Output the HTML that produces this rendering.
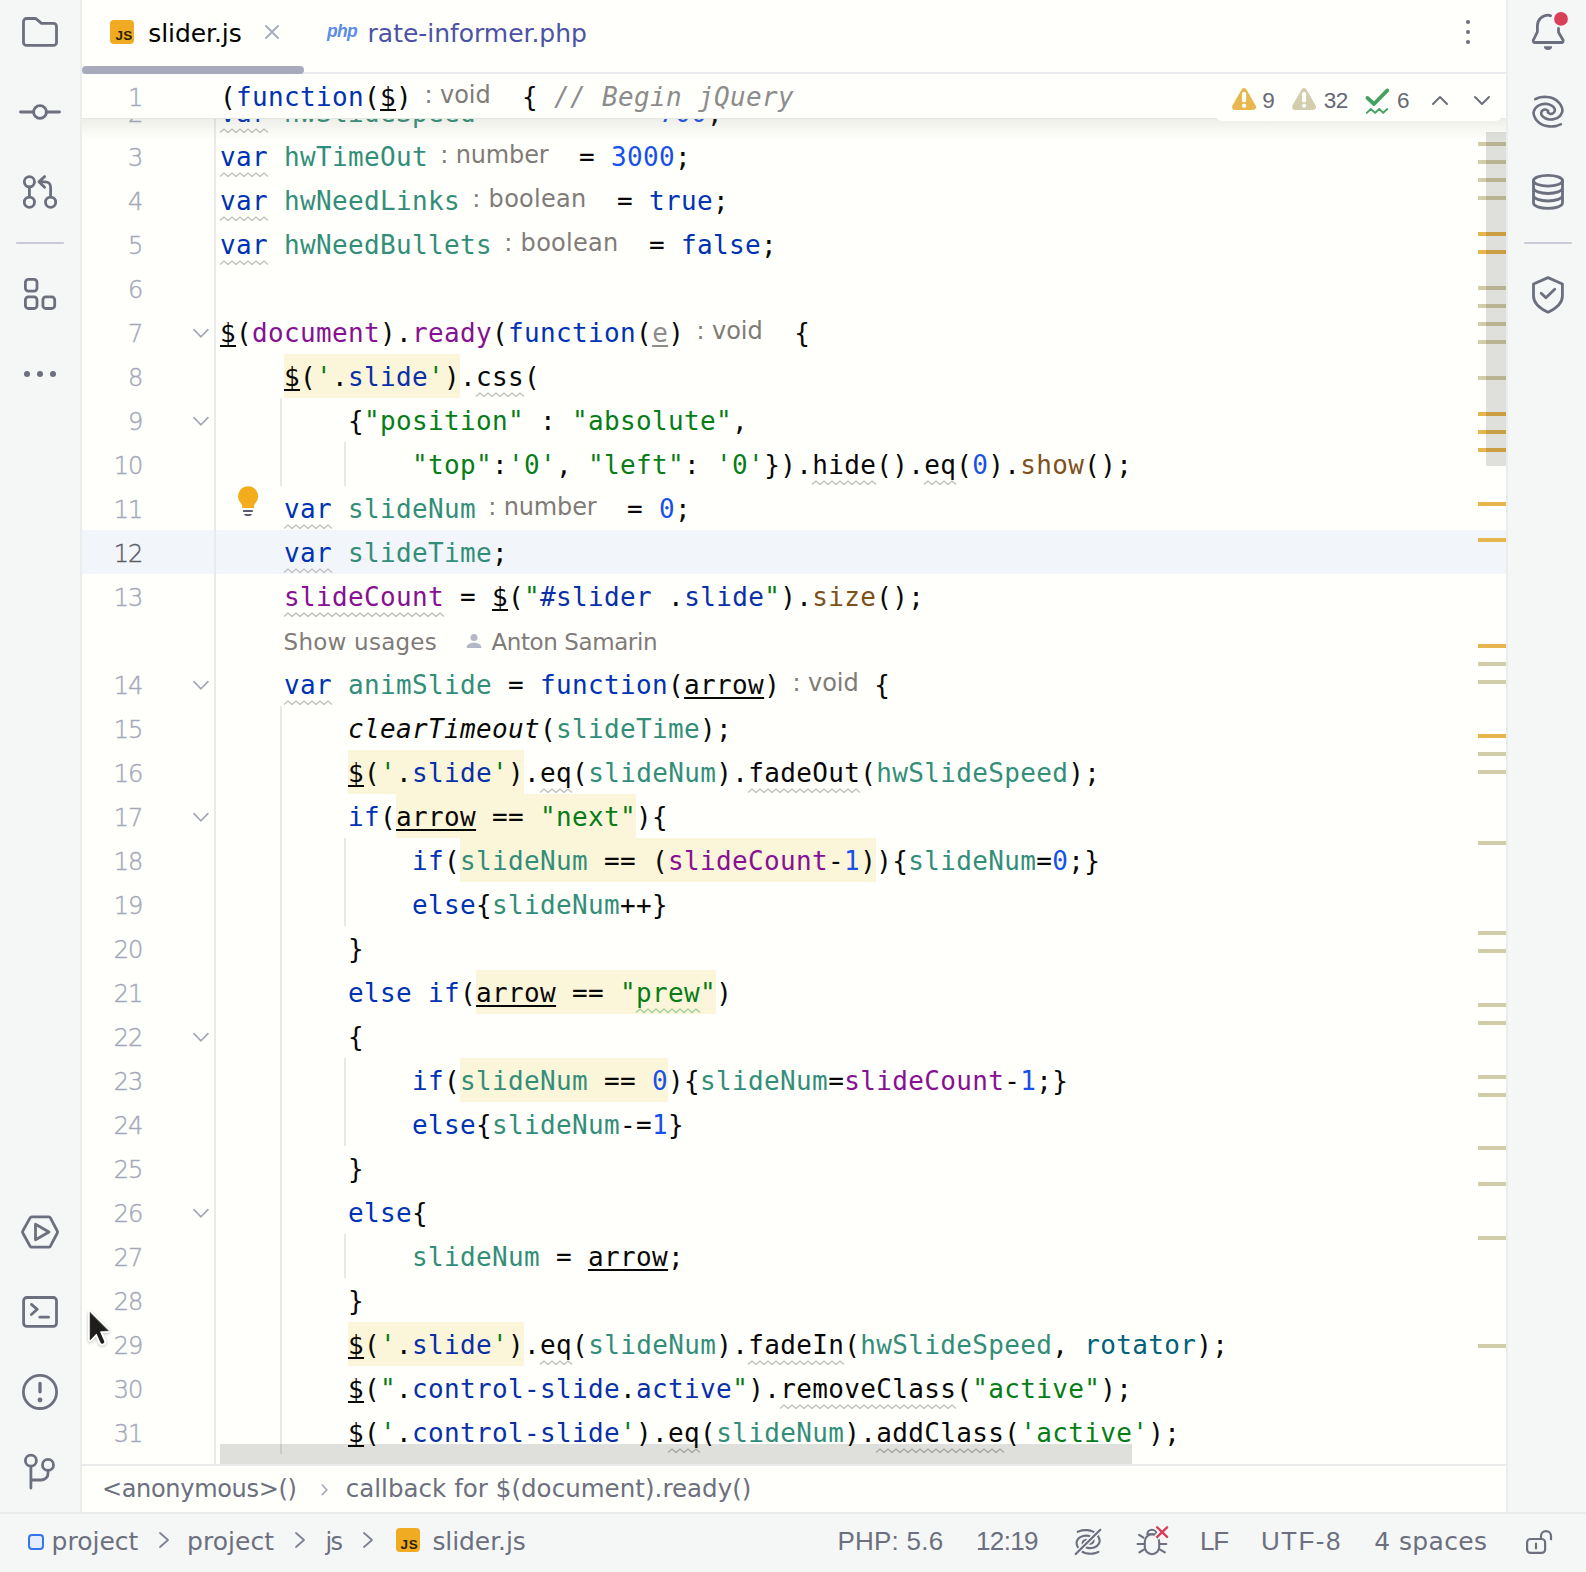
<!DOCTYPE html>
<html lang="en"><head><meta charset="utf-8"><title>slider.js</title>
<style>
html,body{margin:0;padding:0}
body{width:1586px;height:1572px;overflow:hidden;position:relative;background:#f5f7f7;font-family:"Liberation Sans","DejaVu Sans",sans-serif;color:#6c707e}
.abs{position:absolute}
#left{left:0;top:0;width:80px;height:1512px;background:#f5f7f7;border-right:2px solid #ebeded;box-sizing:content-box}
#right{left:1506px;top:0;width:78px;height:1512px;background:#f5f7f7;border-left:2px solid #ebeded}
#main{left:82px;top:0;width:1424px;height:1512px;background:#fffffb;overflow:hidden}
#tabs{left:0;top:0;width:1425px;height:72px}
#tabline{left:0;top:72px;width:1425px;height:2px;background:#e9eaec}
#pill{left:0;top:66px;width:222px;height:8px;border-radius:4px;background:#a8aabc}
.tabtxt{font-size:26px;line-height:30px;white-space:pre}
#ed{left:0;top:74px;width:1425px;height:1390px;overflow:hidden}
.ln{position:absolute;left:138px;height:44px;line-height:46px;white-space:pre;font-family:"DejaVu Sans Mono","Liberation Mono",monospace;font-size:26px;letter-spacing:0.347px;color:#080808}
.num{position:absolute;left:0;width:60.6px;height:44px;line-height:48px;text-align:right;font-family:"DejaVu Sans","Liberation Sans",sans-serif;font-weight:200;font-size:24px;color:#a3a8b8;letter-spacing:-0.8px;-webkit-text-stroke:0.4px #a3a8b8}
.k{color:#0033b3}.v{color:#338e79}.g{color:#871094}.s{color:#067d17}.n{color:#1750eb}
.c{color:#8c8c8c;font-style:italic}.f{color:#80501c}.r{color:#00627a}.b{color:#0a30a8}
.u{text-decoration:underline;text-decoration-thickness:1.6px;text-underline-offset:3.2px;text-decoration-skip-ink:none}
.e{color:#8c8c8c;text-decoration:underline;text-decoration-thickness:1.6px;text-underline-offset:3.2px;text-decoration-skip-ink:none}
.i{font-style:italic}
.inl{display:inline-block;box-sizing:border-box;height:44px;line-height:43px;vertical-align:top;font-family:"DejaVu Sans","Liberation Sans",sans-serif;font-size:24px;color:#7f7b78;white-space:pre;overflow:hidden}
.hl{position:absolute;height:44px;background:#fbf5d9}
.guide{position:absolute;width:2px;background:#e7e8ea}
#crumbs{left:0;top:1464px;width:1425px;height:48px;border-top:2px solid #ebebeb;box-sizing:border-box;font-size:26px;line-height:30px;white-space:pre}
#status{left:0;top:1512px;width:1586px;height:60px;background:#f5f7f7;border-top:2px solid #e9eaea;box-sizing:border-box;font-size:26px;white-space:pre}
#status span,#crumbs span{position:absolute}
.jsic{position:absolute;width:24px;height:24px;border-radius:4px;background:#f0ab22;color:#2b2206;font-weight:bold;font-size:14px;line-height:26px;text-align:center;letter-spacing:-0.5px;font-family:"Liberation Sans","DejaVu Sans",sans-serif}
svg{position:absolute;overflow:visible}
</style></head><body>

<div id="left" class="abs">
<svg width="81" height="1512" viewBox="0 0 81 1512" fill="none" stroke="#6c707e" stroke-width="2.8" stroke-linecap="round" stroke-linejoin="round">
<path d="M23.5 21.5 a3 3 0 0 1 3 -3 H35 a2.2 2.2 0 0 1 1.500 .6 L41.500 23.4 H53.5 a3 3 0 0 1 3 3 V42.4 a3 3 0 0 1 -3 3 H26.5 a3 3 0 0 1 -3 -3 Z"/>
<path d="M20.5 112 H33 M47 112 H59.5"/><circle cx="40" cy="112" r="6.4"/>
<circle cx="29.4" cy="181.8" r="5.1"/><circle cx="29.4" cy="202.2" r="5.1"/><circle cx="50.6" cy="202.2" r="5.1"/>
<path d="M29.4 187.2 V196.8 M50.6 196.800 V187 a5.200 5.200 0 0 0 -5.200 -5.200 H39.500 M44.600 176.600 L38.900 181.800 L44.600 187.300"/>
<path d="M17 243 H63" stroke="#c9ccd6" stroke-width="2"/>
<rect x="25.4" y="279.4" width="11.6" height="11.7" rx="3"/><rect x="25.4" y="296.9" width="11.6" height="11.6" rx="3"/><rect x="42.9" y="296.9" width="11.8" height="11.6" rx="3"/>
<g fill="#6c707e" stroke="none"><circle cx="27" cy="374" r="3"/><circle cx="40" cy="374" r="3"/><circle cx="53" cy="374" r="3"/></g>
<path d="M31.800 1216.900 H48.700 a2 2 0 0 1 1.700 1 L57.300 1231 a2 2 0 0 1 0 2 L50.400 1246.200 a2 2 0 0 1 -1.700 1 H31.800 a2 2 0 0 1 -1.700 -1 L22.800 1233 a2 2 0 0 1 0 -2 L30.100 1217.900 a2 2 0 0 1 1.700 -1 Z"/><path d="M35.500 1224.300 V1239.800 L49 1232 Z"/>
<rect x="23.600" y="1297.500" width="32.900" height="28.900" rx="3.200"/><path d="M31.400 1304.400 L37.300 1309.300 L31.400 1314.500 M39.800 1317.200 H48.600"/>
<circle cx="40" cy="1391.900" r="16.600"/><path d="M40 1383.500 V1391.800" stroke-width="3.300"/><circle cx="40" cy="1400" r="2.400" fill="#6c707e" stroke="none"/>
<circle cx="30.900" cy="1460.700" r="5.500"/><circle cx="48" cy="1464.900" r="5.500"/><path d="M30.900 1466.500 V1488 M30.900 1480 H41.500 a6.500 6.500 0 0 0 6.500 -6.500 V1470.600"/>
</svg>
</div>
<div id="right" class="abs">
<svg width="78" height="400" viewBox="1508 0 78 400" fill="none" stroke="#6c707e" stroke-width="2.8" stroke-linecap="round" stroke-linejoin="round">
<path d="M1550.600 15.700 C1549.800 15.300 1549 15.100 1548 15.100 A10.600 10.600 0 0 0 1537.400 25.700 V31.800 L1533.400 40 a1.700 1.700 0 0 0 1.500 2.500 H1561.500 a1.700 1.700 0 0 0 1.500 -2.500 L1558.500 32.200 V28.500"/><path d="M1543.900 46.200 H1552.100 a4.100 3.800 0 0 1 -8.200 0 z" fill="#6c707e" stroke="none"/>
<circle cx="1561" cy="18.900" r="6.900" fill="#d8405a" stroke="none"/>
<path d="M1535.14 99.14 C1536.02 98.83 1538.46 97.66 1540.43 97.30 C1542.40 96.95 1544.77 96.82 1546.94 97.02 C1549.12 97.22 1551.42 97.56 1553.46 98.53 C1555.50 99.49 1557.70 101.14 1559.16 102.80 C1560.62 104.46 1561.74 106.87 1562.21 108.50 C1562.69 110.13 1562.52 111.22 1562.01 112.57 C1561.50 113.93 1560.45 115.56 1559.16 116.64 C1557.87 117.73 1555.83 118.61 1554.27 119.09 C1552.71 119.56 1551.29 119.63 1549.79 119.50 C1548.30 119.36 1546.61 118.88 1545.32 118.27 C1544.03 117.66 1542.74 116.78 1542.06 115.83 C1541.38 114.88 1541.11 113.52 1541.24 112.57 C1541.38 111.62 1542.13 110.64 1542.87 110.13 C1543.62 109.62 1544.84 109.38 1545.72 109.52 C1546.61 109.66 1547.76 110.71 1548.17 110.94 M1560.87 124.27 C1559.99 124.57 1557.54 125.75 1555.58 126.10 C1553.61 126.45 1551.23 126.59 1549.06 126.38 C1546.89 126.18 1544.58 125.84 1542.55 124.88 C1540.51 123.91 1538.31 122.27 1536.85 120.60 C1535.39 118.94 1534.27 116.53 1533.79 114.90 C1533.32 113.27 1533.49 112.19 1534.00 110.83 C1534.51 109.47 1535.56 107.84 1536.85 106.76 C1538.14 105.67 1540.17 104.79 1541.73 104.32 C1543.29 103.84 1544.72 103.77 1546.21 103.91 C1547.70 104.04 1549.40 104.52 1550.69 105.13 C1551.98 105.74 1553.27 106.62 1553.95 107.57 C1554.63 108.52 1554.90 109.88 1554.76 110.83 C1554.63 111.78 1553.88 112.76 1553.13 113.27 C1552.39 113.78 1551.17 114.02 1550.28 113.88 C1549.40 113.75 1548.25 112.70 1547.84 112.46" stroke-width="2.600"/>
<ellipse cx="1548" cy="180.700" rx="14.500" ry="5.400"/><path d="M1533.500 180.700 V203 a14.500 5.400 0 0 0 29 0 V180.700 M1533.500 188.100 a14.500 5.400 0 0 0 29 0 M1533.500 195.600 a14.500 5.400 0 0 0 29 0" />
<path d="M1525 243 H1571" stroke="#c9ccd6" stroke-width="2"/>
<path d="M1548 277.600 L1562.400 284 V296 C1562.400 303.500 1556 308.500 1548 312.200 C1540 308.500 1533.500 303.500 1533.500 296 V284 Z"/><path d="M1541.200 293.300 L1545.900 297.800 L1554.700 289.200"/>
</svg>
</div>
<div id="main" class="abs">
<div id="tabs" class="abs">
<div class="jsic" style="left:28px;top:20px"></div><div class="abs" style="left:33.6px;top:15.7px;font-family:'Liberation Sans','DejaVu Sans',sans-serif;font-size:13.5px;line-height:40px;letter-spacing:0.09px;white-space:pre;color:#2b2206;font-weight:bold">JS</div>
<div class="abs" style="left:66.2px;top:13.6px;font-family:'DejaVu Sans','Liberation Sans',sans-serif;font-size:25px;line-height:40px;letter-spacing:-0.07px;white-space:pre;color:#000">slider.js</div>
<svg style="left:183px;top:25px" width="14" height="14" viewBox="0 0 14 14" stroke="#a8adbd" stroke-width="2" stroke-linecap="round"><path d="M1 1 L13 13 M13 1 L1 13"/></svg>
<div class="abs" style="left:245.0px;top:10.6px;font-family:'Liberation Sans','DejaVu Sans',sans-serif;font-size:17.5px;line-height:40px;letter-spacing:-0.69px;white-space:pre;color:#5c8ce6;font-style:italic;font-weight:bold">php</div>
<div class="abs" style="left:285.6px;top:13.6px;font-family:'DejaVu Sans','Liberation Sans',sans-serif;font-size:25px;line-height:40px;letter-spacing:-0.03px;white-space:pre;color:#4c52a6">rate-informer.php</div>
<svg style="left:1381px;top:19px" width="10" height="28" viewBox="0 0 10 28" fill="#6c707e"><circle cx="5" cy="3" r="2.050"/><circle cx="5" cy="13" r="2.050"/><circle cx="5" cy="23" r="2.050"/></svg>
</div>
<div id="tabline" class="abs"></div><div id="pill" class="abs"></div>
<div id="ed" class="abs">
<div class="abs" style="left:0;top:456px;width:1425px;height:44px;background:#f2f5f9"></div>
<div class="hl" style="left:202px;top:280px;width:176px"></div>
<div class="hl" style="left:266px;top:676px;width:176px"></div>
<div class="hl" style="left:314px;top:720px;width:240px"></div>
<div class="hl" style="left:378px;top:764px;width:416px"></div>
<div class="hl" style="left:394px;top:896px;width:240px"></div>
<div class="hl" style="left:378px;top:984px;width:208px"></div>
<div class="hl" style="left:266px;top:1248px;width:176px"></div>
<div class="abs" style="left:132px;top:0;width:2px;height:1391px;background:#e9eaec"></div>
<div class="guide" style="left:198px;top:324px;height:88px"></div>
<div class="guide" style="left:262px;top:368px;height:44px"></div>
<div class="guide" style="left:198px;top:632px;height:748px"></div>
<div class="guide" style="left:262px;top:764px;height:88px"></div>
<div class="guide" style="left:262px;top:984px;height:88px"></div>
<div class="guide" style="left:262px;top:1160px;height:44px"></div>
<div class="num" style="top:16px">2</div>
<div class="ln" style="top:16px"><span class="k">var</span> <span class="v">hwSlideSpeed</span><span class="inl" style="width:135px;padding-left:12.3px;letter-spacing:-0.16px">: number</span> = <span class="n">700</span>;</div>
<div class="num" style="top:60px">3</div>
<div class="ln" style="top:60px"><span class="k">var</span> <span class="v">hwTimeOut</span><span class="inl" style="width:135px;padding-left:12.3px;letter-spacing:-0.16px">: number</span> = <span class="n">3000</span>;</div>
<div class="num" style="top:104px">4</div>
<div class="ln" style="top:104px"><span class="k">var</span> <span class="v">hwNeedLinks</span><span class="inl" style="width:141px;padding-left:12.3px;letter-spacing:0.28px">: boolean</span> = <span class="k">true</span>;</div>
<div class="num" style="top:148px">5</div>
<div class="ln" style="top:148px"><span class="k">var</span> <span class="v">hwNeedBullets</span><span class="inl" style="width:141px;padding-left:12.3px;letter-spacing:0.28px">: boolean</span> = <span class="k">false</span>;</div>
<div class="num" style="top:192px">6</div>
<div class="num" style="top:236px">7</div>
<div class="ln" style="top:236px"><span class="u">$</span>(<span class="g">document</span>).<span class="g">ready</span>(<span class="k">function</span>(<span class="e">e</span>)<span class="inl" style="width:94px;padding-left:12.3px;letter-spacing:-0.05px">: void</span> {</div>
<div class="num" style="top:280px">8</div>
<div class="ln" style="top:280px">    <span class="u">$</span>(<span class="s">&#x27;</span>.<span class="b">slide</span><span class="s">&#x27;</span>).css(</div>
<div class="num" style="top:324px">9</div>
<div class="ln" style="top:324px">        {<span class="s">&quot;position&quot;</span> : <span class="s">&quot;absolute&quot;</span>,</div>
<div class="num" style="top:368px">10</div>
<div class="ln" style="top:368px">            <span class="s">&quot;top&quot;</span>:<span class="s">&#x27;0&#x27;</span>, <span class="s">&quot;left&quot;</span>: <span class="s">&#x27;0&#x27;</span>}).hide().eq(<span class="n">0</span>).<span class="f">show</span>();</div>
<div class="num" style="top:412px">11</div>
<div class="ln" style="top:412px">    <span class="k">var</span> <span class="v">slideNum</span><span class="inl" style="width:135px;padding-left:12.3px;letter-spacing:-0.16px">: number</span> = <span class="n">0</span>;</div>
<div class="num" style="top:456px;color:#5a5d6b;-webkit-text-stroke-color:#5a5d6b">12</div>
<div class="ln" style="top:456px">    <span class="k">var</span> <span class="v">slideTime</span>;</div>
<div class="num" style="top:500px">13</div>
<div class="ln" style="top:500px">    <span class="g">slideCount</span> = <span class="u">$</span>(<span class="s">&quot;</span><span class="b">#slider</span> .<span class="b">slide</span><span class="s">&quot;</span>).<span class="f">size</span>();</div>
<div class="num" style="top:588px">14</div>
<div class="ln" style="top:588px">    <span class="k">var</span> <span class="v">animSlide</span> = <span class="k">function</span>(<span class="u">arrow</span>)<span class="inl" style="width:94px;padding-left:12.3px;letter-spacing:-0.05px">: void</span>{</div>
<div class="num" style="top:632px">15</div>
<div class="ln" style="top:632px">        <span class="i">clearTimeout</span>(<span class="v">slideTime</span>);</div>
<div class="num" style="top:676px">16</div>
<div class="ln" style="top:676px">        <span class="u">$</span>(<span class="s">&#x27;</span>.<span class="b">slide</span><span class="s">&#x27;</span>).eq(<span class="v">slideNum</span>).fadeOut(<span class="v">hwSlideSpeed</span>);</div>
<div class="num" style="top:720px">17</div>
<div class="ln" style="top:720px">        <span class="k">if</span>(<span class="u">arrow</span> == <span class="s">&quot;next&quot;</span>){</div>
<div class="num" style="top:764px">18</div>
<div class="ln" style="top:764px">            <span class="k">if</span>(<span class="v">slideNum</span> == (<span class="g">slideCount</span>-<span class="n">1</span>)){<span class="v">slideNum</span>=<span class="n">0</span>;}</div>
<div class="num" style="top:808px">19</div>
<div class="ln" style="top:808px">            <span class="k">else</span>{<span class="v">slideNum</span>++}</div>
<div class="num" style="top:852px">20</div>
<div class="ln" style="top:852px">        }</div>
<div class="num" style="top:896px">21</div>
<div class="ln" style="top:896px">        <span class="k">else</span> <span class="k">if</span>(<span class="u">arrow</span> == <span class="s">&quot;prew&quot;</span>)</div>
<div class="num" style="top:940px">22</div>
<div class="ln" style="top:940px">        {</div>
<div class="num" style="top:984px">23</div>
<div class="ln" style="top:984px">            <span class="k">if</span>(<span class="v">slideNum</span> == <span class="n">0</span>){<span class="v">slideNum</span>=<span class="g">slideCount</span>-<span class="n">1</span>;}</div>
<div class="num" style="top:1028px">24</div>
<div class="ln" style="top:1028px">            <span class="k">else</span>{<span class="v">slideNum</span>-=<span class="n">1</span>}</div>
<div class="num" style="top:1072px">25</div>
<div class="ln" style="top:1072px">        }</div>
<div class="num" style="top:1116px">26</div>
<div class="ln" style="top:1116px">        <span class="k">else</span>{</div>
<div class="num" style="top:1160px">27</div>
<div class="ln" style="top:1160px">            <span class="v">slideNum</span> = <span class="u">arrow</span>;</div>
<div class="num" style="top:1204px">28</div>
<div class="ln" style="top:1204px">        }</div>
<div class="num" style="top:1248px">29</div>
<div class="ln" style="top:1248px">        <span class="u">$</span>(<span class="s">&#x27;</span>.<span class="b">slide</span><span class="s">&#x27;</span>).eq(<span class="v">slideNum</span>).fadeIn(<span class="v">hwSlideSpeed</span>, <span class="r">rotator</span>);</div>
<div class="num" style="top:1292px">30</div>
<div class="ln" style="top:1292px">        <span class="u">$</span>(<span class="s">&quot;</span>.<span class="b">control-slide</span>.<span class="b">active</span><span class="s">&quot;</span>).removeClass(<span class="s">&quot;active&quot;</span>);</div>
<div class="num" style="top:1336px">31</div>
<div class="ln" style="top:1336px">        <span class="u">$</span>(<span class="s">&#x27;</span>.<span class="b">control-slide</span><span class="s">&#x27;</span>).eq(<span class="v">slideNum</span>).addClass(<span class="s">&#x27;active&#x27;</span>);</div>
<div class="num" style="top:1380px">32</div>
<div class="ln" style="top:1380px">        <span class="k">if</span>(<span class="v">hwTimeOut</span> &gt; <span class="n">0</span>){</div>
<div class="abs" style="left:201.6px;top:547.5px;font-family:'DejaVu Sans','Liberation Sans',sans-serif;font-size:23px;line-height:40px;letter-spacing:0.23px;white-space:pre;color:#7f7b78">Show usages</div>
<svg style="left:384px;top:560px" width="16" height="14" viewBox="0 0 16 14" fill="#b4b8c4"><circle cx="8" cy="3.500" r="3.500"/><path d="M0.500 14 a7.500 5.500 0 0 1 15 0 z"/></svg>
<div class="abs" style="left:409.4px;top:547.5px;font-family:'DejaVu Sans','Liberation Sans',sans-serif;font-size:23px;line-height:40px;letter-spacing:-0.40px;white-space:pre;color:#7f7b78">Anton Samarin</div>
<svg style="left:110px;top:254px" width="18" height="11" viewBox="0 0 18 11" fill="none" stroke="#a4a8b8" stroke-width="1.700" stroke-linecap="butt" stroke-linejoin="miter"><path d="M1.500 1.200 L8.900 8.800 L16.400 1.200"/></svg>
<svg style="left:110px;top:342px" width="18" height="11" viewBox="0 0 18 11" fill="none" stroke="#a4a8b8" stroke-width="1.700" stroke-linecap="butt" stroke-linejoin="miter"><path d="M1.500 1.200 L8.900 8.800 L16.400 1.200"/></svg>
<svg style="left:110px;top:606px" width="18" height="11" viewBox="0 0 18 11" fill="none" stroke="#a4a8b8" stroke-width="1.700" stroke-linecap="butt" stroke-linejoin="miter"><path d="M1.500 1.200 L8.900 8.800 L16.400 1.200"/></svg>
<svg style="left:110px;top:738px" width="18" height="11" viewBox="0 0 18 11" fill="none" stroke="#a4a8b8" stroke-width="1.700" stroke-linecap="butt" stroke-linejoin="miter"><path d="M1.500 1.200 L8.900 8.800 L16.400 1.200"/></svg>
<svg style="left:110px;top:958px" width="18" height="11" viewBox="0 0 18 11" fill="none" stroke="#a4a8b8" stroke-width="1.700" stroke-linecap="butt" stroke-linejoin="miter"><path d="M1.500 1.200 L8.900 8.800 L16.400 1.200"/></svg>
<svg style="left:110px;top:1134px" width="18" height="11" viewBox="0 0 18 11" fill="none" stroke="#a4a8b8" stroke-width="1.700" stroke-linecap="butt" stroke-linejoin="miter"><path d="M1.500 1.200 L8.900 8.800 L16.400 1.200"/></svg>
<svg style="left:155px;top:412px" width="22" height="32" viewBox="0 0 22 32"><path d="M11.100 0.300 a10 10 0 0 1 7.400 16.700 c-1.200 1.400 -1.600 2.800 -1.600 4.900 h-11.600 c0 -2.100 -0.400 -3.500 -1.600 -4.900 a10 10 0 0 1 7.400 -16.700 z" fill="#f2ac1c"/><rect x="6" y="24" width="9.900" height="2" rx="0.600" fill="#5a5d6b"/><path d="M7.100 28 h7.800 a3.900 2 0 0 1 -7.800 0 z" fill="#5a5d6b"/></svg>
<svg style="left:0;top:0" width="1425" height="1391" fill="none" stroke-width="1.300" stroke-linejoin="round"><polyline points="138.0,58.5 142.0,55.0 146.0,58.5 150.0,55.0 154.0,58.5 158.0,55.0 162.0,58.5 166.0,55.0 170.0,58.5 174.0,55.0 178.0,58.5 182.0,55.0 186.0,58.5" stroke="#c0c0bc"/><polyline points="138.0,102.5 142.0,99.0 146.0,102.5 150.0,99.0 154.0,102.5 158.0,99.0 162.0,102.5 166.0,99.0 170.0,102.5 174.0,99.0 178.0,102.5 182.0,99.0 186.0,102.5" stroke="#c0c0bc"/><polyline points="138.0,146.5 142.0,143.0 146.0,146.5 150.0,143.0 154.0,146.5 158.0,143.0 162.0,146.5 166.0,143.0 170.0,146.5 174.0,143.0 178.0,146.5 182.0,143.0 186.0,146.5" stroke="#c0c0bc"/><polyline points="138.0,190.5 142.0,187.0 146.0,190.5 150.0,187.0 154.0,190.5 158.0,187.0 162.0,190.5 166.0,187.0 170.0,190.5 174.0,187.0 178.0,190.5 182.0,187.0 186.0,190.5" stroke="#c0c0bc"/><polyline points="394.0,322.5 398.0,319.0 402.0,322.5 406.0,319.0 410.0,322.5 414.0,319.0 418.0,322.5 422.0,319.0 426.0,322.5 430.0,319.0 434.0,322.5 438.0,319.0 442.0,322.5" stroke="#c0c0bc"/><polyline points="730.0,410.5 734.0,407.0 738.0,410.5 742.0,407.0 746.0,410.5 750.0,407.0 754.0,410.5 758.0,407.0 762.0,410.5 766.0,407.0 770.0,410.5 774.0,407.0 778.0,410.5 782.0,407.0 786.0,410.5 790.0,407.0 794.0,410.5" stroke="#c0c0bc"/><polyline points="842.0,410.5 846.0,407.0 850.0,410.5 854.0,407.0 858.0,410.5 862.0,407.0 866.0,410.5 870.0,407.0 874.0,410.5" stroke="#c0c0bc"/><polyline points="202.0,454.5 206.0,451.0 210.0,454.5 214.0,451.0 218.0,454.5 222.0,451.0 226.0,454.5 230.0,451.0 234.0,454.5 238.0,451.0 242.0,454.5 246.0,451.0 250.0,454.5" stroke="#c0c0bc"/><polyline points="202.0,498.5 206.0,495.0 210.0,498.5 214.0,495.0 218.0,498.5 222.0,495.0 226.0,498.5 230.0,495.0 234.0,498.5 238.0,495.0 242.0,498.5 246.0,495.0 250.0,498.5" stroke="#c0c0bc"/><polyline points="202.0,542.5 206.0,539.0 210.0,542.5 214.0,539.0 218.0,542.5 222.0,539.0 226.0,542.5 230.0,539.0 234.0,542.5 238.0,539.0 242.0,542.5 246.0,539.0 250.0,542.5 254.0,539.0 258.0,542.5 262.0,539.0 266.0,542.5 270.0,539.0 274.0,542.5 278.0,539.0 282.0,542.5 286.0,539.0 290.0,542.5 294.0,539.0 298.0,542.5 302.0,539.0 306.0,542.5 310.0,539.0 314.0,542.5 318.0,539.0 322.0,542.5 326.0,539.0 330.0,542.5 334.0,539.0 338.0,542.5 342.0,539.0 346.0,542.5 350.0,539.0 354.0,542.5 358.0,539.0 362.0,542.5" stroke="#bcbcb8"/><polyline points="202.0,630.5 206.0,627.0 210.0,630.5 214.0,627.0 218.0,630.5 222.0,627.0 226.0,630.5 230.0,627.0 234.0,630.5 238.0,627.0 242.0,630.5 246.0,627.0 250.0,630.5" stroke="#c0c0bc"/><polyline points="458.0,718.5 462.0,715.0 466.0,718.5 470.0,715.0 474.0,718.5 478.0,715.0 482.0,718.5 486.0,715.0 490.0,718.5" stroke="#c0c0bc"/><polyline points="666.0,718.5 670.0,715.0 674.0,718.5 678.0,715.0 682.0,718.5 686.0,715.0 690.0,718.5 694.0,715.0 698.0,718.5 702.0,715.0 706.0,718.5 710.0,715.0 714.0,718.5 718.0,715.0 722.0,718.5 726.0,715.0 730.0,718.5 734.0,715.0 738.0,718.5 742.0,715.0 746.0,718.5 750.0,715.0 754.0,718.5 758.0,715.0 762.0,718.5 766.0,715.0 770.0,718.5 774.0,715.0 778.0,718.5" stroke="#c0c0bc"/><polyline points="554.0,938.5 558.0,935.0 562.0,938.5 566.0,935.0 570.0,938.5 574.0,935.0 578.0,938.5 582.0,935.0 586.0,938.5 590.0,935.0 594.0,938.5 598.0,935.0 602.0,938.5 606.0,935.0 610.0,938.5 614.0,935.0 618.0,938.5" stroke="#9fcf9f"/><polyline points="458.0,1290.5 462.0,1287.0 466.0,1290.5 470.0,1287.0 474.0,1290.5 478.0,1287.0 482.0,1290.5 486.0,1287.0 490.0,1290.5" stroke="#c0c0bc"/><polyline points="666.0,1290.5 670.0,1287.0 674.0,1290.5 678.0,1287.0 682.0,1290.5 686.0,1287.0 690.0,1290.5 694.0,1287.0 698.0,1290.5 702.0,1287.0 706.0,1290.5 710.0,1287.0 714.0,1290.5 718.0,1287.0 722.0,1290.5 726.0,1287.0 730.0,1290.5 734.0,1287.0 738.0,1290.5 742.0,1287.0 746.0,1290.5 750.0,1287.0 754.0,1290.5 758.0,1287.0 762.0,1290.5" stroke="#c0c0bc"/><polyline points="698.0,1334.5 702.0,1331.0 706.0,1334.5 710.0,1331.0 714.0,1334.5 718.0,1331.0 722.0,1334.5 726.0,1331.0 730.0,1334.5 734.0,1331.0 738.0,1334.5 742.0,1331.0 746.0,1334.5 750.0,1331.0 754.0,1334.5 758.0,1331.0 762.0,1334.5 766.0,1331.0 770.0,1334.5 774.0,1331.0 778.0,1334.5 782.0,1331.0 786.0,1334.5 790.0,1331.0 794.0,1334.5 798.0,1331.0 802.0,1334.5 806.0,1331.0 810.0,1334.5 814.0,1331.0 818.0,1334.5 822.0,1331.0 826.0,1334.5 830.0,1331.0 834.0,1334.5 838.0,1331.0 842.0,1334.5 846.0,1331.0 850.0,1334.5 854.0,1331.0 858.0,1334.5 862.0,1331.0 866.0,1334.5 870.0,1331.0 874.0,1334.5" stroke="#c0c0bc"/><polyline points="586.0,1378.5 590.0,1375.0 594.0,1378.5 598.0,1375.0 602.0,1378.5 606.0,1375.0 610.0,1378.5 614.0,1375.0 618.0,1378.5" stroke="#c0c0bc"/><polyline points="794.0,1378.5 798.0,1375.0 802.0,1378.5 806.0,1375.0 810.0,1378.5 814.0,1375.0 818.0,1378.5 822.0,1375.0 826.0,1378.5 830.0,1375.0 834.0,1378.5 838.0,1375.0 842.0,1378.5 846.0,1375.0 850.0,1378.5 854.0,1375.0 858.0,1378.5 862.0,1375.0 866.0,1378.5 870.0,1375.0 874.0,1378.5 878.0,1375.0 882.0,1378.5 886.0,1375.0 890.0,1378.5 894.0,1375.0 898.0,1378.5 902.0,1375.0 906.0,1378.5 910.0,1375.0 914.0,1378.5 918.0,1375.0 922.0,1378.5" stroke="#c0c0bc"/></svg>
<div class="abs" style="left:1396px;top:68px;width:28px;height:4px;background:#d2cda9"></div>
<div class="abs" style="left:1396px;top:86px;width:28px;height:4px;background:#d2cda9"></div>
<div class="abs" style="left:1396px;top:104px;width:28px;height:4px;background:#d2cda9"></div>
<div class="abs" style="left:1396px;top:122px;width:28px;height:4px;background:#d2cda9"></div>
<div class="abs" style="left:1396px;top:158px;width:28px;height:4px;background:#e7b54d"></div>
<div class="abs" style="left:1396px;top:176px;width:28px;height:4px;background:#e7b54d"></div>
<div class="abs" style="left:1396px;top:212px;width:28px;height:4px;background:#d2cda9"></div>
<div class="abs" style="left:1396px;top:230px;width:28px;height:4px;background:#d2cda9"></div>
<div class="abs" style="left:1396px;top:248px;width:28px;height:4px;background:#d2cda9"></div>
<div class="abs" style="left:1396px;top:266px;width:28px;height:4px;background:#d2cda9"></div>
<div class="abs" style="left:1396px;top:302px;width:28px;height:4px;background:#d2cda9"></div>
<div class="abs" style="left:1396px;top:338px;width:28px;height:4px;background:#e7b54d"></div>
<div class="abs" style="left:1396px;top:356px;width:28px;height:4px;background:#e7b54d"></div>
<div class="abs" style="left:1396px;top:374px;width:28px;height:4px;background:#e7b54d"></div>
<div class="abs" style="left:1396px;top:428px;width:28px;height:4px;background:#e7b54d"></div>
<div class="abs" style="left:1396px;top:464px;width:28px;height:4px;background:#e7b54d"></div>
<div class="abs" style="left:1396px;top:570px;width:28px;height:4px;background:#e7b54d"></div>
<div class="abs" style="left:1396px;top:588px;width:28px;height:4px;background:#d2cda9"></div>
<div class="abs" style="left:1396px;top:606px;width:28px;height:4px;background:#d2cda9"></div>
<div class="abs" style="left:1396px;top:660px;width:28px;height:4px;background:#e7b54d"></div>
<div class="abs" style="left:1396px;top:678px;width:28px;height:4px;background:#d2cda9"></div>
<div class="abs" style="left:1396px;top:696px;width:28px;height:4px;background:#d2cda9"></div>
<div class="abs" style="left:1396px;top:767px;width:28px;height:4px;background:#d2cda9"></div>
<div class="abs" style="left:1396px;top:857px;width:28px;height:4px;background:#d2cda9"></div>
<div class="abs" style="left:1396px;top:875px;width:28px;height:4px;background:#d2cda9"></div>
<div class="abs" style="left:1396px;top:929px;width:28px;height:4px;background:#d2cda9"></div>
<div class="abs" style="left:1396px;top:947px;width:28px;height:4px;background:#d2cda9"></div>
<div class="abs" style="left:1396px;top:1001px;width:28px;height:4px;background:#d2cda9"></div>
<div class="abs" style="left:1396px;top:1019px;width:28px;height:4px;background:#d2cda9"></div>
<div class="abs" style="left:1396px;top:1072px;width:28px;height:4px;background:#d2cda9"></div>
<div class="abs" style="left:1396px;top:1108px;width:28px;height:4px;background:#d2cda9"></div>
<div class="abs" style="left:1396px;top:1162px;width:28px;height:4px;background:#d2cda9"></div>
<div class="abs" style="left:1396px;top:1270px;width:28px;height:4px;background:#d2cda9"></div>
<div class="abs" style="left:1404px;top:58px;width:20px;height:334px;background:rgba(0,0,0,0.125)"></div>
<div class="abs" style="left:138px;top:1370px;width:912px;height:20px;background:rgba(0,0,0,0.125)"></div>
<div class="abs" style="left:0;top:44px;width:1425px;height:22px;background:linear-gradient(rgba(120,120,110,0.13),rgba(120,120,110,0))"></div>
<div class="abs" style="left:0;top:0;width:1425px;height:44px;background:#fffffb;border-bottom:1px solid #e6e6e3"></div>
<div class="abs" style="left:1133px;top:0;width:288px;height:47px;background:#fffffb;border-radius:0 0 8px 8px"></div>
<div class="num" style="top:0">1</div>
<div class="ln" style="top:0">(<span class="k">function</span>(<span class="u">$</span>)<span class="inl" style="width:94px;padding-left:12.3px;letter-spacing:-0.05px">: void</span> { <span class="c">// Begin jQuery</span></div>
<svg style="left:1149.0px;top:13px" width="26" height="24" viewBox="0 0 26 24"><path d="M13.050 4.200 L22 20 H4.100 Z" fill="#e9b74f" stroke="#e9b74f" stroke-width="6" stroke-linejoin="round"/><rect x="11" y="4.900" width="4.100" height="10.300" rx="1.500" fill="#fffffb"/><rect x="11" y="16.800" width="4.100" height="4" rx="1.700" fill="#fffffb"/></svg>
<div class="abs" style="left:1180.3px;top:7.0px;font-family:'Liberation Sans','DejaVu Sans',sans-serif;font-size:22.5px;line-height:40px;letter-spacing:0.00px;white-space:pre;color:#666874">9</div>
<svg style="left:1208.9px;top:13px" width="26" height="24" viewBox="0 0 26 24"><path d="M13.050 4.200 L22 20 H4.100 Z" fill="#d3cdae" stroke="#d3cdae" stroke-width="6" stroke-linejoin="round"/><rect x="11" y="4.900" width="4.100" height="10.300" rx="1.500" fill="#fffffb"/><rect x="11" y="16.800" width="4.100" height="4" rx="1.700" fill="#fffffb"/></svg>
<div class="abs" style="left:1241.7px;top:7.0px;font-family:'Liberation Sans','DejaVu Sans',sans-serif;font-size:22.5px;line-height:40px;letter-spacing:-0.51px;white-space:pre;color:#666874">32</div>
<svg style="left:1282px;top:14px" width="26" height="28" viewBox="0 0 26 28" fill="none" stroke="#45a162" stroke-linecap="round" stroke-linejoin="round"><path d="M3.400 9.900 L10 16 L23.300 2.400" stroke-width="3.800"/><path d="M2.800 24.900 L6.800 21 L11.200 24.900 L15.200 21 L19.200 24.900 L23.200 21" stroke-width="1.900"/></svg>
<div class="abs" style="left:1314.9px;top:7.0px;font-family:'Liberation Sans','DejaVu Sans',sans-serif;font-size:22.5px;line-height:40px;letter-spacing:0.00px;white-space:pre;color:#666874">6</div>
<svg style="left:1350px;top:22px" width="16" height="9" viewBox="0 0 16 9" fill="none" stroke="#6c707e" stroke-width="2" stroke-linecap="round" stroke-linejoin="round"><path d="M1 8 L8 1 L15 8"/></svg>
<svg style="left:1392px;top:22px" width="16" height="9" viewBox="0 0 16 9" fill="none" stroke="#6c707e" stroke-width="2" stroke-linecap="round" stroke-linejoin="round"><path d="M1 1 L8 8 L15 1"/></svg>
</div>
<div id="crumbs" class="abs"><div class="abs" style="left:19.9px;top:3.3px;font-family:'DejaVu Sans','Liberation Sans',sans-serif;font-size:24px;line-height:40px;letter-spacing:-0.31px;white-space:pre">&lt;anonymous&gt;()</div>
<svg style="left:239px;top:18px" width="8" height="12" viewBox="0 0 8 12" fill="none" stroke="#a8adbd" stroke-width="1.700" stroke-linecap="round" stroke-linejoin="round"><path d="M1.300 1 L5.800 5.800 L1.300 10.600"/></svg>
<div class="abs" style="left:263.7px;top:3.3px;font-family:'DejaVu Sans','Liberation Sans',sans-serif;font-size:24.5px;line-height:40px;letter-spacing:0.04px;white-space:pre">callback for $(document).ready()</div></div>
</div>
<div id="status" class="abs">
<div class="abs" style="left:28px;top:20px;width:16px;height:16px;box-sizing:border-box;border:2px solid #3574f0;border-radius:4px;background:#e4ecfd"></div>
<div class="abs" style="left:51.5px;top:8.4px;font-family:'DejaVu Sans','Liberation Sans',sans-serif;font-size:25px;line-height:40px;letter-spacing:0.02px;white-space:pre">project</div><svg style="left:159px;top:18px" width="10" height="16" viewBox="0 0 10 16" fill="none" stroke="#7d8190" stroke-width="1.800" stroke-linecap="round" stroke-linejoin="round"><path d="M1 1 L9 8 L1 15"/></svg>
<div class="abs" style="left:187.1px;top:8.4px;font-family:'DejaVu Sans','Liberation Sans',sans-serif;font-size:25px;line-height:40px;letter-spacing:0.02px;white-space:pre">project</div><svg style="left:295px;top:18px" width="10" height="16" viewBox="0 0 10 16" fill="none" stroke="#7d8190" stroke-width="1.800" stroke-linecap="round" stroke-linejoin="round"><path d="M1 1 L9 8 L1 15"/></svg>
<div class="abs" style="left:325.4px;top:8.4px;font-family:'DejaVu Sans','Liberation Sans',sans-serif;font-size:24px;line-height:40px;letter-spacing:-1.47px;white-space:pre">js</div><svg style="left:363px;top:18px" width="10" height="16" viewBox="0 0 10 16" fill="none" stroke="#7d8190" stroke-width="1.800" stroke-linecap="round" stroke-linejoin="round"><path d="M1 1 L9 8 L1 15"/></svg>
<div class="jsic" style="left:396px;top:14px"></div><div class="abs" style="left:400.4px;top:10.7px;font-family:'Liberation Sans','DejaVu Sans',sans-serif;font-size:13.5px;line-height:40px;letter-spacing:0.79px;white-space:pre;color:#2b2206;font-weight:bold">JS</div>
<div class="abs" style="left:432.4px;top:8.4px;font-family:'DejaVu Sans','Liberation Sans',sans-serif;font-size:25px;line-height:40px;letter-spacing:-0.08px;white-space:pre">slider.js</div>
<div class="abs" style="left:837.4px;top:7.4px;font-family:'Liberation Sans','DejaVu Sans',sans-serif;font-size:26px;line-height:40px;letter-spacing:0.24px;white-space:pre">PHP: 5.6</div>
<div class="abs" style="left:976.1px;top:7.4px;font-family:'Liberation Sans','DejaVu Sans',sans-serif;font-size:26px;line-height:40px;letter-spacing:-0.68px;white-space:pre">12:19</div>
<svg style="left:0;top:-2px" width="1586" height="60" viewBox="0 1512 1586 60" fill="none" stroke="#6c707e" stroke-linecap="round" stroke-linejoin="round">
<g transform="translate(1088.1 1541.9) scale(0.8) translate(-1548 -111.7)"><path d="M1535.14 99.14 C1536.02 98.83 1538.46 97.66 1540.43 97.30 C1542.40 96.95 1544.77 96.82 1546.94 97.02 C1549.12 97.22 1551.42 97.56 1553.46 98.53 C1555.50 99.49 1557.70 101.14 1559.16 102.80 C1560.62 104.46 1561.74 106.87 1562.21 108.50 C1562.69 110.13 1562.52 111.22 1562.01 112.57 C1561.50 113.93 1560.45 115.56 1559.16 116.64 C1557.87 117.73 1555.83 118.61 1554.27 119.09 C1552.71 119.56 1551.29 119.63 1549.79 119.50 C1548.30 119.36 1546.61 118.88 1545.32 118.27 C1544.03 117.66 1542.74 116.78 1542.06 115.83 C1541.38 114.88 1541.11 113.52 1541.24 112.57 C1541.38 111.62 1542.13 110.64 1542.87 110.13 C1543.62 109.62 1544.84 109.38 1545.72 109.52 C1546.61 109.66 1547.76 110.71 1548.17 110.94 M1560.87 124.27 C1559.99 124.57 1557.54 125.75 1555.58 126.10 C1553.61 126.45 1551.23 126.59 1549.06 126.38 C1546.89 126.18 1544.58 125.84 1542.55 124.88 C1540.51 123.91 1538.31 122.27 1536.85 120.60 C1535.39 118.94 1534.27 116.53 1533.79 114.90 C1533.32 113.27 1533.49 112.19 1534.00 110.83 C1534.51 109.47 1535.56 107.84 1536.85 106.76 C1538.14 105.67 1540.17 104.79 1541.73 104.32 C1543.29 103.84 1544.72 103.77 1546.21 103.91 C1547.70 104.04 1549.40 104.52 1550.69 105.13 C1551.98 105.74 1553.27 106.62 1553.95 107.57 C1554.63 108.52 1554.90 109.88 1554.76 110.83 C1554.63 111.78 1553.88 112.76 1553.13 113.27 C1552.39 113.78 1551.17 114.02 1550.28 113.88 C1549.40 113.75 1548.25 112.70 1547.84 112.46" stroke-width="2.700"/></g>
<path d="M1075.700 1554 L1100.300 1529.800" stroke="#f5f7f7" stroke-width="5" stroke-linecap="butt"/>
<path d="M1075.700 1554 L1100.300 1529.800" stroke-width="2.200"/>
<g stroke-width="2.100">
<rect x="1144.800" y="1534.300" width="14.400" height="19.900" rx="7.200"/>
<path d="M1147.300 1534.300 a4.650 4.500 0 0 1 9.300 0 Z"/>
<path d="M1139.100 1534.900 L1143.400 1537.700 M1137.600 1544 H1143.800 M1139.400 1552.300 L1143.800 1549.600 M1160.200 1544 H1166.300 M1160.200 1549.600 L1164.800 1552.300"/>
</g>
<path d="M1156.500 1526.600 L1167.800 1537.600 M1167.800 1526.600 L1156.500 1537.600" stroke="#f5f7f7" stroke-width="6" stroke-linecap="butt"/>
<path d="M1157.200 1527.300 L1167.100 1536.900 M1167.100 1527.300 L1157.200 1536.900" stroke="#d8405a" stroke-width="2.400"/>
<g stroke-width="2.200"><rect x="1527.100" y="1539" width="18" height="13.900" rx="3.500"/><path d="M1536 1543.600 V1548.400 M1541 1538.500 V1536.100 a5 5 0 0 1 10 0 V1539.300"/></g>
</svg>
<div class="abs" style="left:1199.9px;top:7.4px;font-family:'Liberation Sans','DejaVu Sans',sans-serif;font-size:26px;line-height:40px;letter-spacing:-1.06px;white-space:pre">LF</div>
<div class="abs" style="left:1260.9px;top:7.4px;font-family:'Liberation Sans','DejaVu Sans',sans-serif;font-size:26px;line-height:40px;letter-spacing:1.45px;white-space:pre">UTF-8</div>
<div class="abs" style="left:1374.3px;top:8.4px;font-family:'DejaVu Sans','Liberation Sans',sans-serif;font-size:25px;line-height:40px;letter-spacing:0.37px;white-space:pre">4 spaces</div>
</div>
<svg style="left:0;top:1290px" width="130" height="70" viewBox="0 1290 130 70" stroke-linejoin="round" stroke-linecap="round">
<g fill="#fff" stroke="#fff" stroke-width="4.200" style="filter:drop-shadow(0 1px 1.500px rgba(0,0,0,0.25))"><path d="M90.100 1312.800 V1339.900 L96 1333.700 L100.800 1331 L108.100 1330.700 Z"/><path d="M98 1332 L102.300 1341.700" stroke-width="8" fill="none"/></g>
<g fill="#1f1e1c" stroke="#1f1e1c" stroke-width="0.600"><path d="M90.100 1312.800 V1339.900 L96 1333.700 L100.800 1331 L108.100 1330.700 Z"/><path d="M98 1332 L102.300 1341.700" stroke-width="4" fill="none"/></g>
</svg>
</body></html>
